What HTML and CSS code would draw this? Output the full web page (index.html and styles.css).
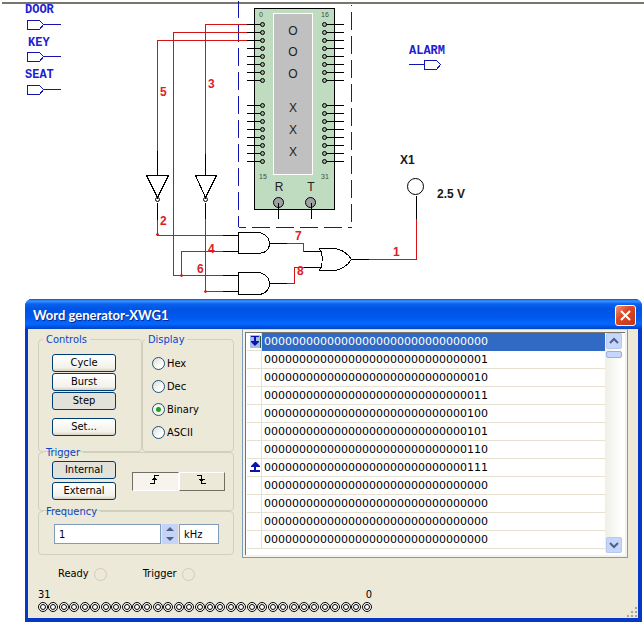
FILE: index.html
```html
<!DOCTYPE html>
<html lang="en">
<head>
<meta charset="utf-8">
<title>Word generator-XWG1</title>
<link rel="stylesheet" href="styles.css">
</head>
<body>
<svg class="schematic" width="644" height="299" viewBox="0 0 644 299" role="img" aria-label="Alarm logic circuit">
  <defs>
    <g id="port"><path d="M27 -4H39L43 0L39 5H27ZM43 0H60"/></g>
    <g id="pinL"><path d="M246 0H262"/><circle cx="262" cy="0" r="2"/></g>
    <g id="pinR"><path d="M324 0H343"/><circle cx="324" cy="0" r="2"/></g>
    <g id="pins"><use href="#pinL"/><use href="#pinR"/></g>
    <g id="bank">
      <use href="#pins"/><use href="#pins" y="8"/><use href="#pins" y="16"/><use href="#pins" y="24"/>
      <use href="#pins" y="32"/><use href="#pins" y="40"/><use href="#pins" y="48"/><use href="#pins" y="56"/>
    </g>
  </defs>
  <path class="rule" d="M2 3H644"/>
  <g transform="translate(.5 .5)">
    <g class="blue">
      <use href="#port" y="24"/><use href="#port" y="56"/><use href="#port" y="89"/>
      <path d="M408 64H424M424 60H436L440 64L436 69H424Z"/>
      <g class="dash">
        <path d="M238 0V227"/><path d="M351 11V227"/><path d="M351 4V5"/>
        <path d="M238 227H351" stroke-dashoffset="11"/>
      </g>
    </g>
    <g class="chip">
      <rect class="board" x="254" y="8" width="80" height="201"/>
      <rect class="face" x="273" y="13" width="39" height="161"/>
      <use href="#bank" y="24"/><use href="#bank" y="105"/>
      <circle cx="278" cy="202" r="5"/><circle cx="310" cy="202" r="5"/>
      <path d="M278 202V218M311 202V218"/>
    </g>
    <g class="red">
      <path d="M246 24H205V153M246 32H173V275M246 40H157V150M157 219V235H222M222 251H181V275M173 275H222M205 218V291H222"/>
      <path d="M286 243H303V251M286 283H294V267H303M368 259H416V218"/>
      <circle cx="157" cy="234" r="1"/><circle cx="181" cy="275" r="1"/><circle cx="205" cy="291" r="1"/>
    </g>
    <g class="black">
      <path d="M157 150V175M146 175H168L157 197ZM157 202V219M205 153V175M195 175H216L205 197ZM205 202V218"/>
      <circle cx="157" cy="199" r="2"/><circle cx="205" cy="199" r="2"/>
      <path d="M222 235H238M222 251H238M222 275H238M222 291H238"/>
      <path d="M238 232H259C266 234 269 238 269 243C269 248 266 252 259 253H238ZM238 272H259C266 274 269 278 269 283C269 288 266 293 259 294H238Z"/>
      <path d="M269 243H286M269 283H286M303 251H321M303 267H321M351 259H368"/>
      <path d="M319 248H334C342 249 347 253 351 259C347 265 342 269 334 270H319C323 262 323 256 319 248Z"/>
      <circle cx="415" cy="186" r="8"/><path d="M416 195V218"/>
    </g>
  </g>
  <g class="net">
    <text x="160" y="96">5</text><text x="208" y="88">3</text><text x="160" y="225">2</text>
    <text x="208" y="253">4</text><text x="197" y="273">6</text><text x="295" y="240">7</text>
    <text x="297" y="275">8</text><text x="393" y="256">1</text>
  </g>
  <g class="port-name">
    <text x="25" y="13">DOOR</text><text x="28" y="46">KEY</text><text x="25" y="78">SEAT</text><text x="409" y="54">ALARM</text>
  </g>
  <g class="part"><text x="400" y="164">X1</text><text x="437" y="198">2.5 V</text></g>
  <g class="mark">
    <text x="293" y="35">O</text><text x="293" y="56">O</text><text x="293" y="78">O</text>
    <text x="293" y="112">X</text><text x="293" y="134">X</text><text x="293" y="156">X</text>
    <text x="279" y="191">R</text><text x="311" y="191">T</text>
  </g>
  <g class="pin-no">
    <text x="261" y="17">0</text><text x="325" y="17">16</text><text x="263" y="179">15</text><text x="325" y="179">31</text>
  </g>
</svg>

<section class="window">
  <header class="titlebar">
    <h1>Word generator-XWG1</h1>
    <button class="close" type="button" aria-label="Close"><svg width="19" height="19" viewBox="0 0 19 19"><path d="M5 5L14 14M14 5L5 14"/></svg></button>
  </header>
  <div class="content">
    <div class="main">
      <form class="settings">
        <div class="top">
          <fieldset class="controls">
            <legend>Controls</legend>
            <button class="btn" type="button">Cycle</button>
            <button class="btn" type="button">Burst</button>
            <button class="btn pressed" type="button">Step</button>
            <button class="btn set" type="button">Set...</button>
          </fieldset>
          <fieldset class="display">
            <legend>Display</legend>
            <label><input type="radio" name="display">Hex</label>
            <label><input type="radio" name="display">Dec</label>
            <label><input type="radio" name="display" checked>Binary</label>
            <label><input type="radio" name="display">ASCII</label>
          </fieldset>
        </div>
        <fieldset class="trigger">
          <legend>Trigger</legend>
          <div class="source">
            <button class="btn pressed" type="button">Internal</button>
            <button class="btn" type="button">External</button>
          </div>
          <div class="edges">
            <button class="edge on" type="button" aria-label="Rising edge"><svg width="12" height="11" viewBox="0 0 12 11"><path d="M1 9.500H5.500V1.500H10M3 5.500H8M4 4.500H7"/></svg></button>
            <button class="edge" type="button" aria-label="Falling edge"><svg width="12" height="11" viewBox="0 0 12 11"><path d="M1 1.500H5.500V9.500H10M3 5.500H9M4 6.500H7"/></svg></button>
          </div>
        </fieldset>
        <fieldset class="frequency">
          <legend>Frequency</legend>
          <input class="value" type="text" value="1" aria-label="Frequency">
          <div class="spin">
            <button type="button" aria-label="Increase"><svg width="8" height="4" viewBox="0 0 8 4"><path d="M0 4L4 0L8 4Z"/></svg></button>
            <button type="button" aria-label="Decrease"><svg width="8" height="4" viewBox="0 0 8 4"><path d="M0 0L4 4L8 0Z"/></svg></button>
          </div>
          <input class="unit" type="text" value="kHz" aria-label="Unit">
        </fieldset>
      </form>
      <div class="list">
        <table>
          <tbody>
            <tr class="selected"><td><svg width="11" height="13" viewBox="0 0 11 13"><path class="back" d="M0 0H10V13H0Z"/><path class="edge-line" d="M10 1H11V13H10Z"/><path d="M1 1H9V2H6V6H9V7L5 11L1 7V6H4V2H1Z"/></svg></td><td>00000000000000000000000000000000</td></tr>
            <tr><td></td><td>00000000000000000000000000000001</td></tr>
            <tr><td></td><td>00000000000000000000000000000010</td></tr>
            <tr><td></td><td>00000000000000000000000000000011</td></tr>
            <tr><td></td><td>00000000000000000000000000000100</td></tr>
            <tr><td></td><td>00000000000000000000000000000101</td></tr>
            <tr><td></td><td>00000000000000000000000000000110</td></tr>
            <tr><td><svg width="11" height="13" viewBox="0 0 11 13"><path d="M5 1H6L10 5V6H6V9H10V11H0V9H4V6H1V5Z"/></svg></td><td>00000000000000000000000000000111</td></tr>
            <tr><td></td><td>00000000000000000000000000000000</td></tr>
            <tr><td></td><td>00000000000000000000000000000000</td></tr>
            <tr><td></td><td>00000000000000000000000000000000</td></tr>
            <tr><td></td><td>00000000000000000000000000000000</td></tr>
          </tbody>
        </table>
        <div class="scroll">
          <button type="button" aria-label="Scroll up"><svg width="10" height="8" viewBox="0 0 10 8"><path d="M1 6L5 2L9 6"/></svg></button>
          <span class="thumb"></span>
          <button class="down" type="button" aria-label="Scroll down"><svg width="10" height="8" viewBox="0 0 10 8"><path d="M1 2L5 6L9 2"/></svg></button>
        </div>
      </div>
    </div>
    <div class="status"><span>Ready<i class="lamp"></i></span><span>Trigger<i class="lamp"></i></span></div>
    <div class="bits">
      <div class="range"><span>31</span><span>0</span></div>
      <div class="leds"><i></i><i></i><i></i><i></i><i></i><i></i><i></i><i></i><i></i><i></i><i></i><i></i><i></i><i></i><i></i><i></i><i></i><i></i><i></i><i></i><i></i><i></i><i></i><i></i><i></i><i></i><i></i><i></i><i></i><i></i><i></i><i></i></div>
    </div>
    <svg class="grip" width="11" height="11" viewBox="0 0 11 11"><path d="M8 0h2v2h-2zM4 4h2v2h-2zM8 4h2v2h-2zM0 8h2v2h-2zM4 8h2v2h-2zM8 8h2v2h-2z"/></svg>
  </div>
</section>
</body>
</html>
```
FILE: styles.css
```css
* { box-sizing: border-box; }
body {
  margin: 0;
  background: #fff;
  color: #000;
  font: 11px/14px "DejaVu Sans Condensed", "DejaVu Sans", sans-serif;
}
button, input { margin: 0; font: inherit; color: inherit; }

/* schematic */
.schematic { display: block; fill: none; }
.schematic path, .schematic rect { shape-rendering: crispEdges; }
.rule { stroke: #77756d; stroke-width: 2; }
.blue { stroke: #1414b0; }
.dash { stroke-dasharray: 18 6; }
.red { stroke: #d41414; }
.red circle { fill: #e01818; }
.black { stroke: #000; }
.chip { stroke: #000; }
.chip circle { fill: #a0a0a4; }
.chip use { fill: #98b098; }
.board { fill: #c0dcc0; }
.face { fill: #c0c0c0; stroke: #fff; }
.schematic text { font-family: "Liberation Sans", sans-serif; }
.net { fill: #e01c24; font-size: 12px; font-weight: bold; }
.part { fill: #181818; font-size: 12px; font-weight: bold; }
.schematic .port-name text { font-family: "Liberation Mono", monospace; }
.port-name { fill: #2020d0; font-size: 12px; font-weight: bold; }
.mark { fill: #202020; font-size: 12px; text-anchor: middle; }
.pin-no { fill: #405040; font-size: 7px; text-anchor: middle; }

/* window frame */
.window {
  margin: 0 2px 2px 25px;
  border: solid #0638c8;
  border-width: 0 4px 4px 3px;
  border-radius: 7px 7px 0 0;
  background: #0638c8;
}
.titlebar {
  display: flex;
  align-items: center;
  justify-content: space-between;
  height: 30px;
  margin: 0 -4px 0 -3px;
  padding: 2px 6px 0 8px;
  border-radius: 7px 7px 0 0;
  background: linear-gradient(#0a50c8 0, #3c94ff 2px, #0862ee 5px, #0054e3 10px, #0058ee 18px, #0468ff 25px, #0058e8 27px, #0040c4 30px);
}
h1 {
  margin: 0;
  color: #fff;
  font: bold 13px/18px Lato, sans-serif;
  text-shadow: 1px 1px 0 #0a2a90;
}
.close {
  width: 21px;
  height: 21px;
  padding: 0;
  border: 1px solid #fff;
  border-radius: 3px;
  background: linear-gradient(135deg, #f09878, #dc4828 40%, #c03810);
}
.close svg { display: block; fill: none; stroke: #fff; stroke-width: 2; }
.content { position: relative; padding-bottom: 6px; background: #ece9d8; }
.main { display: grid; grid-template-columns: 196px 1fr; gap: 8px; padding: 0 10px; }

/* group boxes */
.settings { padding-top: 4px; }
.top { display: grid; grid-template-columns: 104px 1fr; }
fieldset {
  min-width: 0;
  margin: 0;
  padding: 0;
  border: 1px solid #d0d0bf;
  border-radius: 4px;
}
legend { margin-left: -9px; padding: 0 3px; color: #0a46c8; line-height: 13px; }
.controls { height: 119px; padding: 8px 13px 0; }
.btn {
  display: block;
  width: 64px;
  height: 18px;
  margin-bottom: 1px;
  padding: 0;
  border: 1px solid #003c74;
  border-radius: 3px;
  background: linear-gradient(#fff, #f2f1ea 80%, #d8d2c4);
  line-height: 14px;
}
.btn.pressed { background: #e3e2da; }
.btn.set { margin-top: 8px; }
.display { height: 119px; padding: 6px 9px; }
.display legend { margin-left: -7px; }
.display label { display: flex; align-items: center; gap: 2px; height: 23px; }
input[type="radio"] {
  appearance: none;
  width: 13px;
  height: 13px;
  border: 1px solid #21517a;
  border-radius: 50%;
  background: linear-gradient(135deg, #dcdcd6, #fff 70%);
}
input[type="radio"]:checked { background: radial-gradient(#21a121 2px, #f4f4f0 3px); }
.trigger { display: flex; height: 65px; margin-top: -6px; padding: 2px 8px 0 13px; }
.source { width: 80px; }
.source .btn { margin-bottom: 3px; }
.edges { display: flex; flex: 1; padding-top: 11px; }
.edge {
  display: flex;
  flex: 1;
  align-items: center;
  justify-content: center;
  height: 19px;
  padding: 0 0 4px;
  border: 1px solid;
  border-color: #fff #716f64 #716f64 #fff;
  background: #ece9d8;
}
.edge.on { border-color: #716f64 #fff #fff #716f64; background: #f6f4ec; }
.edge svg { fill: none; stroke: #000; shape-rendering: crispEdges; }
.frequency { display: flex; height: 50px; margin-top: -6px; padding: 6px 14px 0 15px; }
.frequency legend { margin-left: -11px; }
.value, .unit {
  min-width: 0;
  height: 20px;
  padding: 0 4px;
  border: 1px solid #7f9db9;
  border-radius: 0;
  background: #fff;
}
.value { flex: 1; }
.unit { width: 40px; }
.spin { display: flex; flex-direction: column; width: 18px; height: 20px; padding: 0 1px; }
.spin button {
  display: flex;
  flex: 1;
  align-items: center;
  justify-content: center;
  padding: 0;
  border: 0;
  background: #c6d3f8;
}
.spin svg { fill: #4d6185; }

/* word list */
.list {
  display: flex;
  height: 229px;
  padding: 3px 5px 4px 4px;
  border: 1px solid #7f9db9;
  border-top-color: #d8d4c4;
  background: #fff;
  box-shadow: inset 0 0 0 2px #f4f2e8, inset 3px 3px 0 #77756d;
}
table { flex: 1; align-self: start; border-collapse: separate; border-spacing: 0; font-family: "DejaVu Sans", sans-serif; }
td { height: 18px; padding: 0; border-bottom: 1px solid #e6e0d0; }
td:first-child { width: 15px; border-right: 1px solid #e6e0d0; }
td:last-child { padding-left: 2px; }
.selected td:last-child { border-color: #316ac5; background: #316ac5; color: #fff; }
td svg { display: block; margin-left: auto; fill: #1010b0; }
td .back { fill: #a4bce8; }
td .edge-line { fill: #206040; }
.scroll { display: flex; flex-direction: column; width: 17px; background: linear-gradient(90deg, #f0efe6, #fff); }
.scroll button {
  display: flex;
  align-items: center;
  justify-content: center;
  width: 16px;
  height: 16px;
  margin-left: 1px;
  padding: 0;
  border: 1px solid #b4c8f0;
  border-radius: 2px;
  background: #c6d5fb;
}
.scroll svg { fill: none; stroke: #4d6185; stroke-width: 2; }
.scroll .down { margin-top: auto; }
.thumb { height: 7px; margin: 2px 0 0 1px; border: 1px solid #98b0e0; border-radius: 2px; background: #c6d5fb; }

/* status */
.status { display: flex; gap: 36px; padding: 9px 30px 0; }
.status span { display: flex; align-items: center; gap: 5px; }
.lamp { width: 13px; height: 13px; border: 1px solid #d0ccb8; border-radius: 50%; }
.bits { width: 334px; margin: 7px 10px 0; }
.range, .leds { display: flex; justify-content: space-between; }
.leds i {
  display: grid;
  place-items: center;
  width: 10px;
  height: 10px;
  border: 1px solid #000;
  border-radius: 50%;
  background: #fff;
}
.leds i::before { content: ""; width: 4px; height: 4px; border: 1px solid #000; border-radius: 50%; }
.grip { position: absolute; right: 0; bottom: 0; fill: #a8a494; }
```
